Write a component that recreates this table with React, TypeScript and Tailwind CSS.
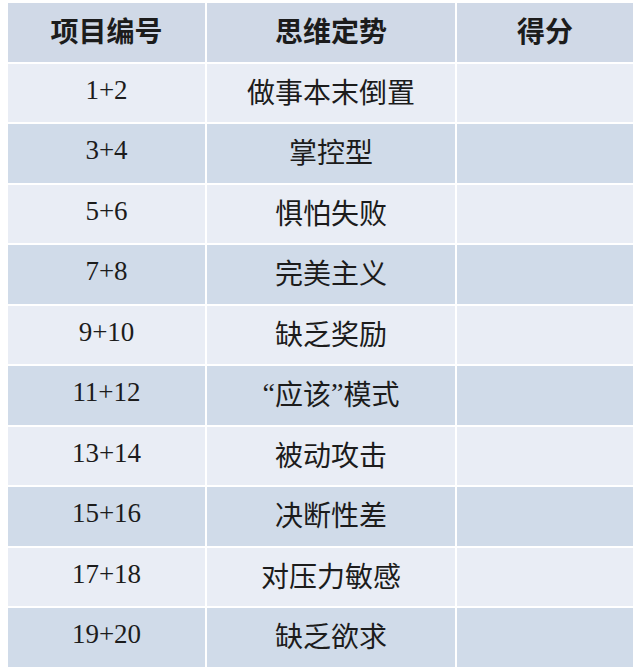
const ROWS: [string, React.ReactNode][] = [
  ['1+2', '做事本末倒置'],
  ['3+4', '掌控型'],
  ['5+6', '惧怕失败'],
  ['7+8', '完美主义'],
  ['9+10', '缺乏奖励'],
  [
    '11+12',
    <>
      <span className="font-['Liberation_Serif',serif]">“</span>应该
      <span className="font-['Liberation_Serif',serif]">”</span>模式
    </>,
  ],
  ['13+14', '被动攻击'],
  ['15+16', '决断性差'],
  ['17+18', '对压力敏感'],
  ['19+20', '缺乏欲求'],
];

const sans = "font-['Noto_Sans_CJK_SC','Noto_Sans',sans-serif]";

export default function App() {
  return (
    <div className="h-[672px] w-[640px] bg-white pl-[8px] pt-[3px]">
      <div className="grid w-[625px] grid-cols-[197px_248px_176px] auto-rows-[58.5px] gap-[2px] bg-white text-[#1c1c1c]">
        {/* header */}
        {['项目编号', '思维定势', '得分'].map((h) => (
          <div
            key={h}
            className={`flex items-center justify-center bg-[#d0d9e7] pb-[4px] text-[28px] font-bold ${sans}`}
          >
            {h}
          </div>
        ))}

        {ROWS.map(([num, label], i) => {
          const bg = i % 2 === 0 ? 'bg-[#e9edf5]' : 'bg-[#d0dbe9]';
          return [
            <div
              key={num + 'a'}
              className={`flex items-center justify-center ${bg} pb-[6px] font-['Liberation_Serif',serif] text-[27px]`}
            >
              {num}
            </div>,
            <div
              key={num + 'b'}
              className={`flex items-center justify-center ${bg} pb-[4px] text-[28px] ${sans}`}
            >
              {label}
            </div>,
            <div key={num + 'c'} className={bg} />,
          ];
        })}
      </div>
    </div>
  );
}
